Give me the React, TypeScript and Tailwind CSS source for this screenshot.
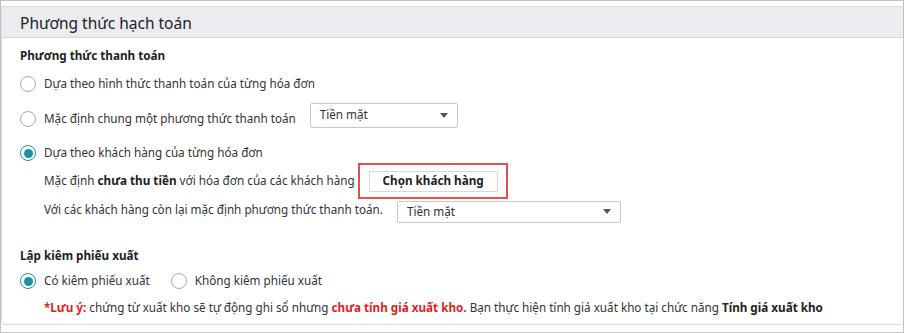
import React from 'react';

function Radio({ checked }: { checked?: boolean }) {
  return (
    <span
      className={`w-[16px] h-[16px] rounded-full border flex items-center justify-center shrink-0 bg-white ${
        checked ? 'border-[#1a93a6]' : 'border-[#a9a9a9]'
      }`}
    >
      {checked && <span className="w-[9px] h-[9px] rounded-full bg-[#1a93a6]" />}
    </span>
  );
}

function Select({ label, className }: { label: string; className: string }) {
  return (
    <div className={`flex items-center justify-between border border-[#c8c8c8] rounded-[2px] bg-white pl-[9px] pr-[9px] ${className}`}>
      <span>{label}</span>
      <svg width="8" height="5" viewBox="0 0 8 5">
        <path d="M0 0h8L4 5z" fill="#555" />
      </svg>
    </div>
  );
}

export default function App() {
  return (
    <div
      className="w-[904px] h-[333px] border border-[#c2c2c2] pt-[5px] bg-white text-[11.7px] text-[#333]"
      style={{ fontFamily: '"Noto Sans", "Open Sans", sans-serif' }}
    >
      <div className="h-[319px] border border-[#dcdcdc] rounded-b-[4px] border-r-0">
        {/* Header */}
        <div className="h-[31px] bg-[#ebecf0] border-b border-[#d6d6d6] pl-[18px] pt-[3px] flex items-center text-[15.5px] text-[#222]">
          Phương thức hạch toán
        </div>

        <div className="pl-[18px] pt-[8px] flex flex-col">
          <div className="h-[20px] flex items-center font-bold text-[#222]">Phương thức thanh toán</div>

          <label className="h-[24px] mt-[6px] flex items-center gap-[8px]">
            <Radio />
            <span>Dựa theo hình thức thanh toán của từng hóa đơn</span>
          </label>

          <label className="h-[26px] mt-[10px] flex items-center gap-[8px]">
            <Radio />
            <span>Mặc định chung một phương thức thanh toán</span>
            <Select label="Tiền mặt" className="ml-[6px] w-[148px] h-[25px] mb-[8px]" />
          </label>

          <label className="h-[24px] mt-[9px] flex items-center gap-[8px]">
            <Radio checked />
            <span>Dựa theo khách hàng của từng hóa đơn</span>
          </label>

          <div className="h-[26px] mt-[3px] pl-[24px] flex items-center">
            <span>
              Mặc định <b className="text-[#222]">chưa thu tiền</b> với hóa đơn của các khách hàng
            </span>
            <div className="relative ml-[14px]">
              <button className="w-[129px] h-[21px] border border-[#d9d9d9] bg-white font-bold text-[#222] flex items-center justify-center">
                Chọn khách hàng
              </button>
              <div className="absolute -left-[11px] -top-[8px] w-[150px] h-[36px] border-2 border-[#d9534f]" />
            </div>
          </div>

          <div className="h-[24px] mt-[4px] pl-[24px] flex items-center">
            <span>Với các khách hàng còn lại mặc định phương thức thanh toán.</span>
            <Select label="Tiền mặt" className="ml-[14px] w-[224px] h-[22px] mt-[3px]" />
          </div>

          <div className="h-[20px] mt-[24px] flex items-center font-bold text-[#222]">Lập kiêm phiếu xuất</div>

          <div className="h-[24px] mt-[3px] flex items-center gap-[8px]">
            <Radio checked />
            <span>Có kiêm phiếu xuất</span>
            <span className="ml-[13px]">
              <Radio />
            </span>
            <span>Không kiêm phiếu xuất</span>
          </div>

          <div className="h-[20px] mt-[5px] pl-[24px] flex items-center whitespace-nowrap">
            <p>
              <b className="text-[#e21d1d]">*Lưu ý:</b> chứng từ xuất kho sẽ tự động ghi sổ nhưng{' '}
              <b className="text-[#e21d1d]">chưa tính giá xuất kho.</b> Bạn thực hiện tính giá xuất kho tại chức
              năng <b className="text-[#222]">Tính giá xuất kho</b>
            </p>
          </div>
        </div>
      </div>
    </div>
  );
}
